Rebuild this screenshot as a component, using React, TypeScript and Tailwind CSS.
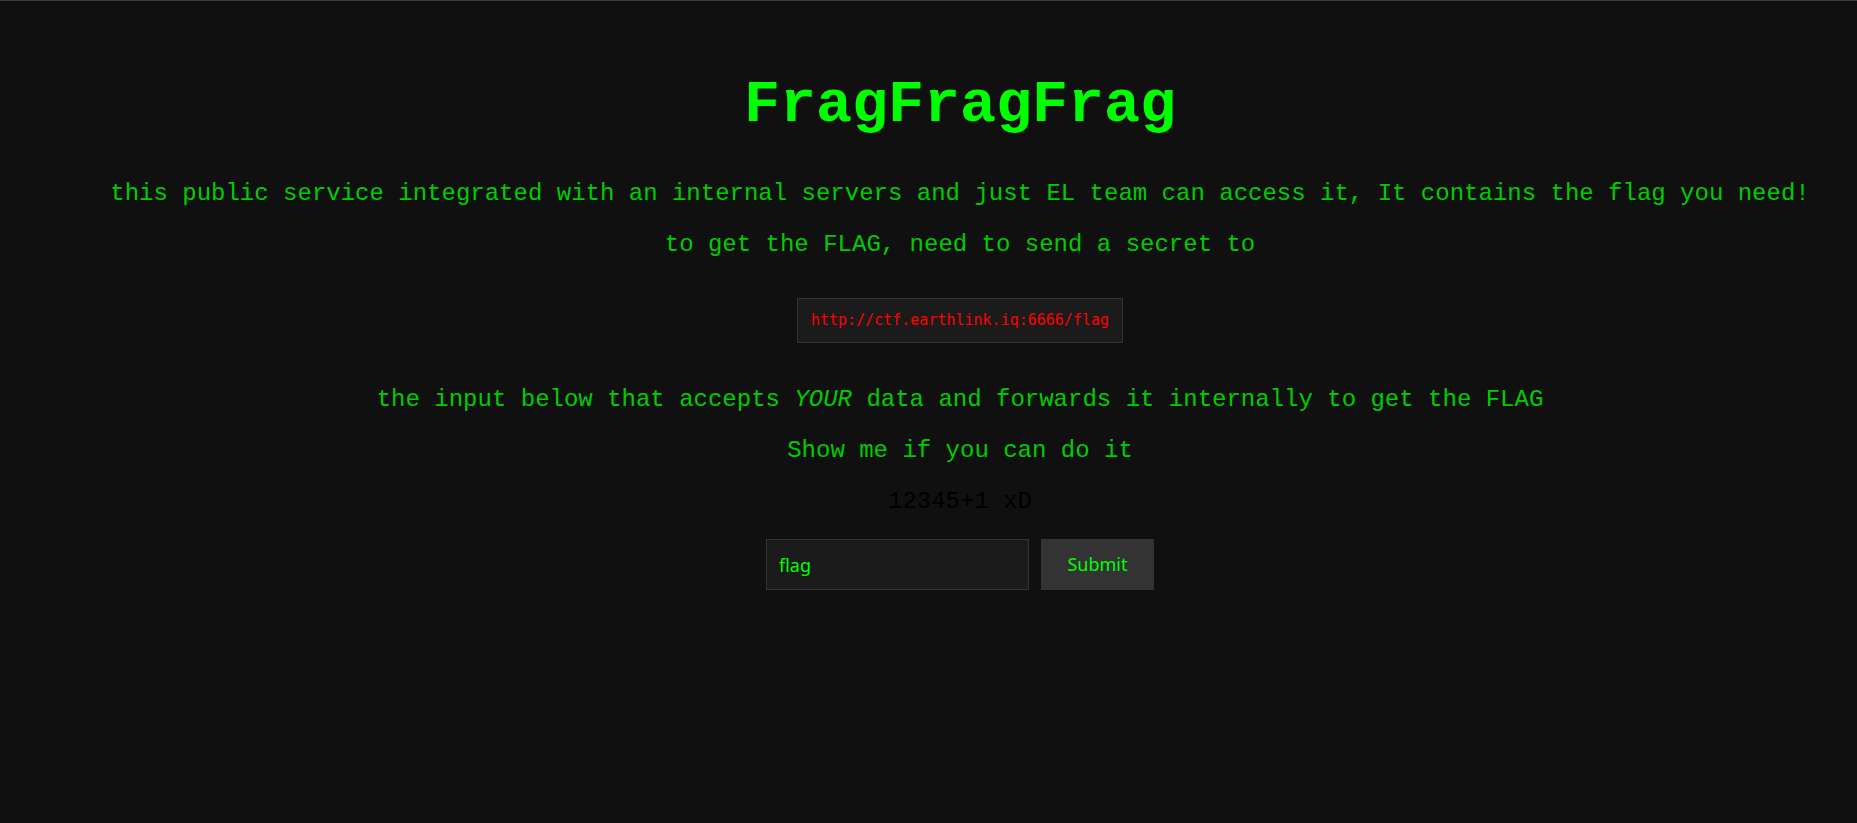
import { useState } from 'react';

const mono = "font-['Courier_New','Liberation_Mono',monospace]";

export default function App() {
  const [value, setValue] = useState('flag');

  return (
    <div className="min-h-[823px] w-full bg-[#101010] border-t border-[#3b3947]">
      <div className={`flex flex-col items-center pl-[63px] text-center ${mono}`}>
        {/* Title */}
        <h1 className="mt-[70px] text-[60px] leading-[68px] font-bold text-[#00ff00]">FragFragFrag</h1>

        <p className="mt-[41px] text-[24px] leading-[27px] text-[#00cc00] whitespace-nowrap">
          this public service integrated with an internal servers and just EL team can access it, It contains the flag you need!
        </p>
        <p className="mt-[24px] text-[24px] leading-[27px] text-[#00cc00]">
          to get the FLAG, need to send a secret to
        </p>

        {/* Target URL */}
        <code className="mt-[40px] h-[45px] px-[13px] flex items-center bg-[#1b1b1b] border border-[#333333] text-[15px] text-[#ff0000] font-['Consolas','DejaVu_Sans_Mono',monospace]">
          http://ctf.earthlink.iq:6666/flag
        </code>

        <p className="mt-[43px] text-[24px] leading-[27px] text-[#00cc00]">
          the input below that accepts <em>YOUR</em> data and forwards it internally to get the FLAG
        </p>
        <p className="mt-[24px] text-[24px] leading-[27px] text-[#00cc00]">Show me if you can do it</p>
        <p className="mt-[24px] text-[24px] leading-[27px] text-black">12345+1 xD</p>

        {/* Form */}
        <form className="mt-[24px] flex gap-3" onSubmit={(e) => e.preventDefault()}>
          <input
            value={value}
            onChange={(e) => setValue(e.target.value)}
            className="w-[263px] h-[51px] px-3 bg-[#1b1b1b] border border-[#333333] text-[18px] text-[#00ff00] outline-none font-['Noto_Sans',sans-serif]"
          />
          <button className="w-[113px] h-[51px] bg-[#333333] text-[18px] text-[#00ff00] font-['Noto_Sans',sans-serif]">
            Submit
          </button>
        </form>
      </div>
    </div>
  );
}
